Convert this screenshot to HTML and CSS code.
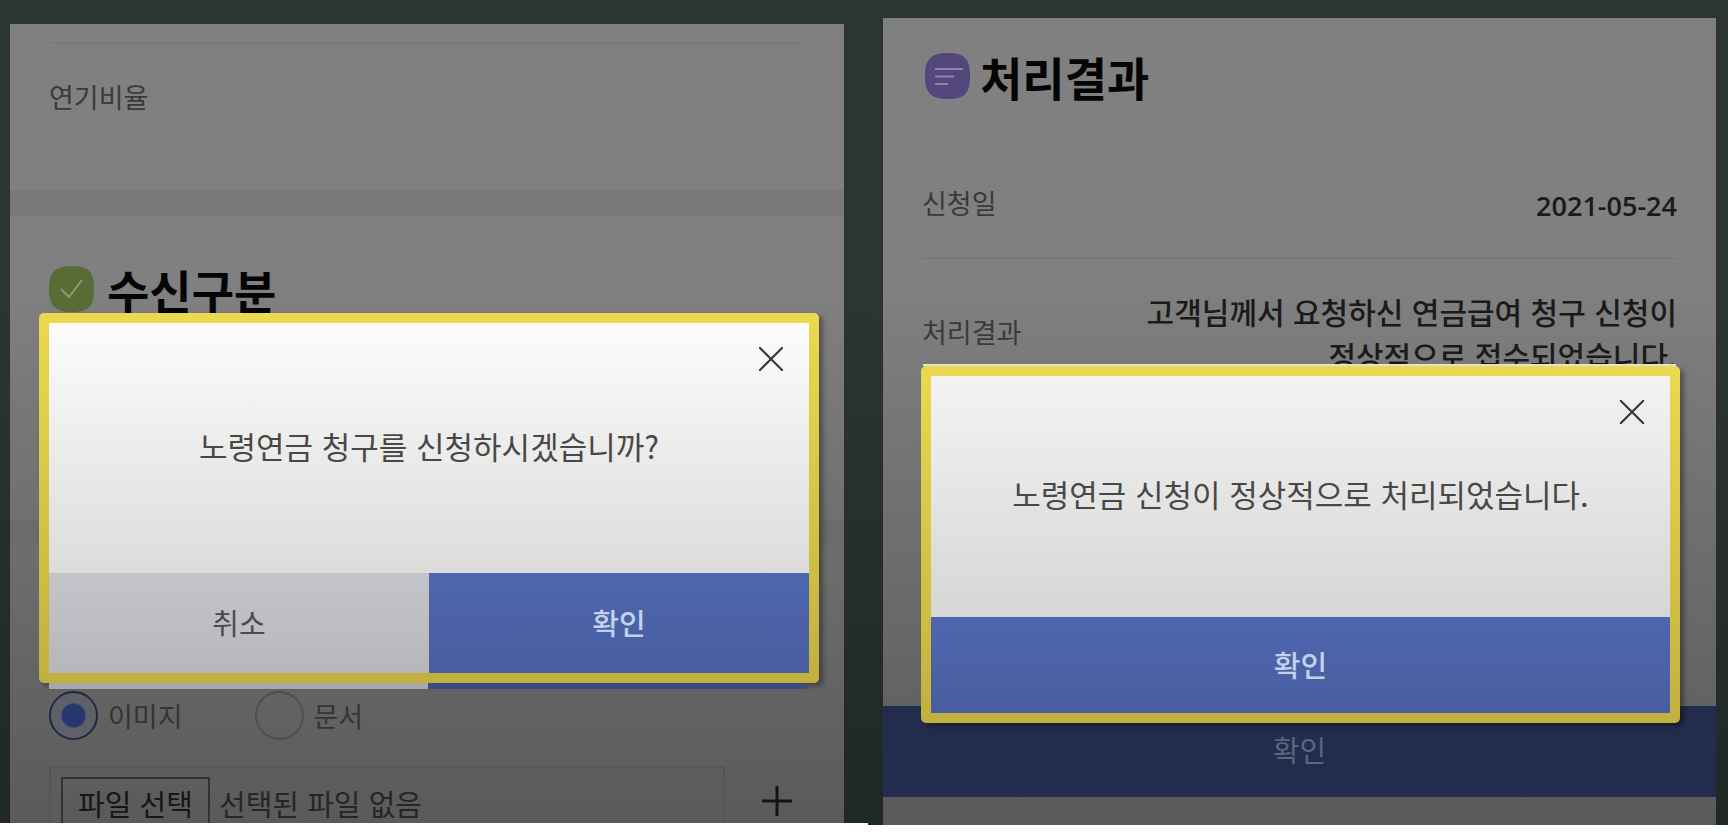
FILE: index.html
```html
<!DOCTYPE html>
<html lang="ko">
<head>
<meta charset="utf-8">
<title>노령연금 청구</title>
<link rel="stylesheet" href="styles.css">
</head>
<body>
<main class="stages">
  <section class="stage stage-request">
    <div class="panel">
      <div class="row row-rate"><span class="label">연기비율</span></div>
      <div class="band"></div>
      <div class="group">
        <h2 class="title">
          <svg class="badge" viewBox="0 0 46 46" aria-hidden="true"><path fill="#596c36" d="M23 0C40 0 45 6 45 23S40 46 23 46 0 40 0 23 6 0 23 0Z"/><path d="M12 23l8 8 13-17" fill="none" stroke="#8c9a72" stroke-width="2"/></svg>
          수신구분
        </h2>
      </div>
      <div class="band band-dim"></div>
      <form class="attach">
        <div class="choices">
          <label class="choice"><input type="radio" name="kind" checked>이미지</label>
          <label class="choice"><input type="radio" name="kind">문서</label>
        </div>
        <div class="file-line">
          <div class="file-box">
            <button type="button" class="file-pick">파일 선택</button>
            <span class="file-name">선택된 파일 없음</span>
          </div>
          <button type="button" class="add" aria-label="추가"><svg viewBox="0 0 30 30"><path d="M15 0v30M0 15h30" stroke="#141414" stroke-width="3"/></svg></button>
        </div>
      </form>
    </div>
    <div class="modal" role="dialog" aria-label="청구 확인">
      <div class="modal-body">
        <button type="button" class="close" aria-label="닫기"><svg viewBox="0 0 24 24"><path d="M0 0l24 24M24 0L0 24" stroke="#333" stroke-width="2"/></svg></button>
        <p class="message">노령연금 청구를 신청하시겠습니까?</p>
      </div>
      <div class="actions">
        <button type="button" class="action cancel">취소</button>
        <button type="button" class="action confirm">확인</button>
      </div>
    </div>
  </section>

  <section class="stage stage-result">
    <div class="panel">
      <h2 class="title">
        <svg class="badge" viewBox="0 0 46 46" aria-hidden="true"><path fill="#53467a" d="M23 0C40 0 45 6 45 23S40 46 23 46 0 40 0 23 6 0 23 0Z"/><path d="M10 16h28M10 23.500h19M10 31h13" fill="none" stroke="#8d83a8" stroke-width="2"/></svg>
        처리결과
      </h2>
      <div class="row row-date"><span class="label">신청일</span><time class="value date">2021-05-24</time></div>
      <div class="row row-outcome"><span class="label">처리결과</span><p class="value">고객님께서 요청하신 연금급여 청구 신청이<br>정상적으로 접수되었습니다.</p></div>
      <button type="button" class="page-confirm">확인</button>
    </div>
    <div class="modal" role="dialog" aria-label="처리 완료">
      <div class="modal-body">
        <button type="button" class="close" aria-label="닫기"><svg viewBox="0 0 24 24"><path d="M0 0l24 24M24 0L0 24" stroke="#333" stroke-width="2"/></svg></button>
        <p class="message">노령연금 신청이 정상적으로 처리되었습니다.</p>
      </div>
      <div class="actions">
        <button type="button" class="action confirm">확인</button>
      </div>
    </div>
  </section>
</main>
</body>
</html>
```

FILE: styles.css
```css
* {
  box-sizing: border-box;
}

body {
  margin: 0;
  background: #fff;
  font-family: "Noto Sans CJK KR", "Noto Sans", sans-serif;
  font-size: 27px;
  color: #333;
}

h2,
p {
  margin: 0;
}

button {
  margin: 0;
  padding: 0;
  border: 0;
  background: none;
  font-family: inherit;
  color: inherit;
}

.stages {
  display: grid;
  grid-template-columns: minmax(0, 868fr) minmax(0, 860fr);
  align-items: start;
}

.stage {
  position: relative;
  display: flex;
  flex-direction: column;
  overflow: hidden;
  background: linear-gradient(#2b3532 0, #2b3532 35%, #202826 100%);
}

.stage-request {
  height: calc(100vh - 12px);
  padding: 24px 24px 0 10px;
}

.stage-result {
  height: calc(100vh - 10px);
  padding: 18px 12px 0 15px;
}

.panel {
  flex: 1;
  display: flex;
  flex-direction: column;
  min-height: 0;
  background: linear-gradient(#808080 0, #808080 33%, #5a5a5a 100%);
}

.stage-request .panel {
  padding-top: 18px;
}

.stage-result .panel {
  padding: 35px 0 28px;
}

.row {
  flex: none;
  display: flex;
  justify-content: space-between;
  align-items: center;
  margin: 0 39px;
}

.label {
  padding-bottom: 4px;
  color: #3a3a3a;
}

.row-rate {
  height: 148px;
  padding-bottom: 38px;
  border-top: 2px solid #7b7b7b;
}

.band {
  flex: none;
  height: 26px;
  background: #797979;
}

.band-dim {
  background: #6b6b6b;
}

.group {
  flex: none;
  height: 304px;
  padding-top: 50px;
}

.title {
  flex: none;
  display: flex;
  align-items: center;
  gap: 12px;
  height: 46px;
  margin: 0 39px;
  color: #050505;
  font-size: 46px;
  font-weight: 700;
  line-height: 46px;
}

.stage-result .title {
  gap: 9px;
  margin-left: 42px;
}

.badge {
  width: 46px;
  height: 46px;
}

.attach {
  margin: 0 39px;
  padding-top: 146px;
}

.choices {
  display: flex;
  gap: 72px;
  height: 49px;
}

.choice {
  display: flex;
  align-items: center;
  gap: 10px;
  padding-bottom: 2px;
  color: #343434;
}

.choice input {
  appearance: none;
  width: 49px;
  height: 49px;
  margin: 0;
  border: 2px solid #4f4f4f;
  border-radius: 50%;
}

.choice input:checked {
  border-color: #24283a;
  background: radial-gradient(circle, #26366f 0, #26366f 11px, #5e606a 13px);
}

.file-line {
  display: flex;
  align-items: flex-start;
  justify-content: space-between;
  margin-top: 25px;
}

.file-box {
  flex: 1;
  display: flex;
  align-items: center;
  gap: 9px;
  height: 74px;
  margin-right: 37px;
  padding-left: 10px;
  border: 2px solid #565656;
}

.file-pick {
  width: 149px;
  height: 52px;
  border: 2px solid #323232;
  color: #161616;
  font-size: 29px;
}

.file-name {
  color: #262626;
  font-size: 29px;
}

.add {
  width: 30px;
  height: 30px;
  margin: 20px 13px 0 0;
}

.add svg,
.close svg {
  display: block;
  width: 100%;
  height: 100%;
}

.row-date {
  height: 109px;
  margin-top: 51px;
  border-bottom: 1px solid #737373;
}

.row-outcome {
  padding-top: 30px;
}

.value {
  color: #1a1a1a;
  font-size: 30px;
  font-weight: 500;
  line-height: 44px;
  text-align: right;
}

.date {
  padding-top: 4px;
  font-family: "Open Sans", "Noto Sans", sans-serif;
  font-size: 27px;
  font-weight: 600;
}

.page-confirm {
  flex: none;
  height: 91px;
  margin-top: auto;
  padding-bottom: 6px;
  background: #222c4c;
  color: #5b6580;
  font-size: 29px;
}

.modal {
  position: absolute;
  padding: 10px;
  border-radius: 5px;
  background: linear-gradient(#ecd94f, #c2b03e);
  box-shadow: 4px 3px 5px rgba(0, 0, 0, 0.35);
}

.stage-request .modal {
  top: 313px;
  left: 39px;
  right: 49px;
}

.stage-result .modal {
  top: 366px;
  left: 53px;
  right: 48px;
}

/* Edge of the dialog sheet that shows past the yellow frame */
.stage-request .modal::after {
  content: "";
  position: absolute;
  top: 100%;
  left: 10px;
  right: 12px;
  height: 6px;
  background: linear-gradient(90deg, #a9a7ab 50%, #3b4a80 50%);
}

.stage-result .modal::before {
  content: "";
  position: absolute;
  bottom: 100%;
  left: 2px;
  right: 4px;
  height: 2px;
  background: #e6e3c4;
}

.modal-body {
  position: relative;
  display: flex;
  align-items: center;
  justify-content: center;
  height: 250px;
  padding-bottom: 6px;
  background: linear-gradient(#fcfcfc, #dcdcdb);
}

.stage-result .modal-body {
  height: 241px;
  background: linear-gradient(#f3f3f3, #d6d6d5);
}

.close {
  position: absolute;
  top: 24px;
  right: 26px;
  width: 24px;
  height: 24px;
}

.message {
  color: #484848;
  font-size: 31px;
}

.actions {
  display: flex;
  height: 100px;
}

.stage-result .actions {
  height: 96px;
}

.action {
  flex: 1;
  padding-bottom: 3px;
  font-size: 29px;
}

.cancel {
  background: linear-gradient(#c4c5c9, #b6b6bb);
  color: #4b4b4e;
}

.confirm {
  background: linear-gradient(#4e66b0, #485e9f);
  color: #c3d0ee;
  font-weight: 500;
}
```
